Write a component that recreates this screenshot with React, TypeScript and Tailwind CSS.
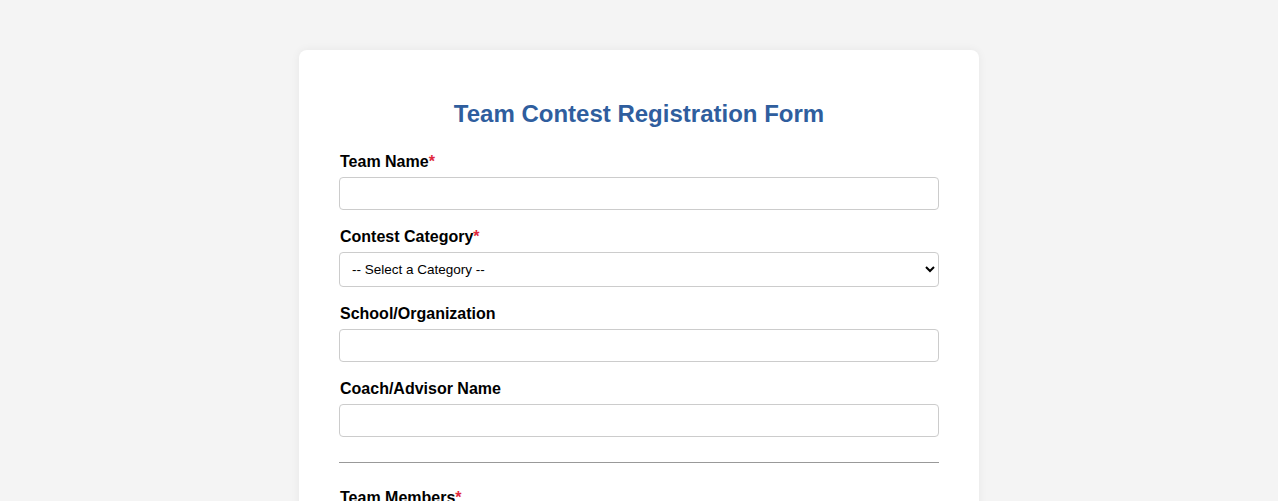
import React from "react";

function Label({ text, required }: { text: string; required?: boolean }) {
  return (
    <label className="block text-[16px] font-bold leading-[18px] text-black mb-[6px] pl-[1px]">
      {text}
      {required && <span className="text-[#e0283c]">*</span>}
    </label>
  );
}

function Input() {
  return (
    <input
      type="text"
      className="block w-full h-[33px] border border-[#cccccc] rounded-[4px] px-[10px] text-[14px] bg-white outline-none"
    />
  );
}

export default function App() {
  return (
    <div
      className="min-h-screen bg-[#f4f4f4] pt-[50px] pb-[40px]"
      style={{ fontFamily: '"Liberation Sans", Arial, sans-serif' }}
    >
      <div className="w-[680px] mx-auto bg-white rounded-[8px] shadow-[0_0_10px_rgba(0,0,0,0.06)] px-[40px] pt-[50px] pb-[40px]">
        <h2 className="text-center text-[24px] font-bold leading-[28px] text-[#2f5e9e] mb-[25px]">
          Team Contest Registration Form
        </h2>

        <div className="mb-[18px]">
          <Label text="Team Name" required />
          <Input />
        </div>

        <div className="mb-[18px]">
          <Label text="Contest Category" required />
          <select className="block w-full h-[35px] border border-[#cccccc] rounded-[4px] px-[8px] text-[13.5px] bg-white text-black">
            <option>-- Select a Category --</option>
            <option>Mathematics</option>
            <option>Programming</option>
            <option>Science</option>
          </select>
        </div>

        <div className="mb-[18px]">
          <Label text="School/Organization" />
          <Input />
        </div>

        <div className="mb-[25px]">
          <Label text="Coach/Advisor Name" />
          <Input />
        </div>

        <hr className="border-0 border-t border-[#999999] mb-[26px]" />

        <div className="mb-[18px]">
          <Label text="Team Members" required />
          <Input />
        </div>
        <div className="mb-[18px]">
          <Input />
        </div>
      </div>
    </div>
  );
}
